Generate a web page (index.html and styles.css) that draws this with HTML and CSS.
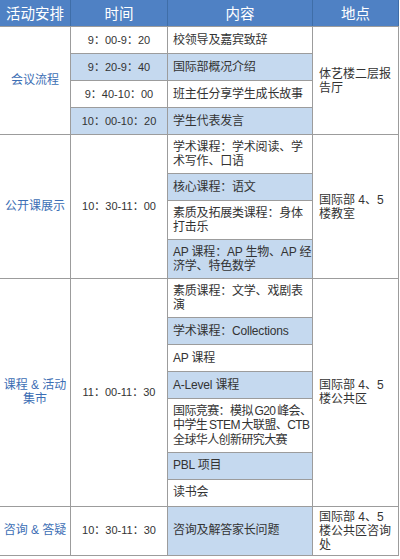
FILE: index.html
```html
<!DOCTYPE html>
<html lang="zh-CN">
<head>
<meta charset="utf-8">
<title>活动安排</title>
<link rel="stylesheet" href="styles.css">
</head>
<body>
<div class="sched">
  <div class="h">活动安排</div>
  <div class="h">时间</div>
  <div class="h">内容</div>
  <div class="h">地点</div>

  <div class="c cat s4">会议流程</div>
  <div class="c tm">9：00-9：20</div>
  <div class="c ct">校领导及嘉宾致辞</div>
  <div class="c pl s4"><span>体艺楼二层报<br>告厅</span></div>
  <div class="c tm alt">9：20-9：40</div>
  <div class="c ct alt">国际部概况介绍</div>
  <div class="c tm">9：40-10：00</div>
  <div class="c ct">班主任分享学生成长故事</div>
  <div class="c tm alt">10：00-10：20</div>
  <div class="c ct alt">学生代表发言</div>

  <div class="c cat s4">公开课展示</div>
  <div class="c tm s4">10：30-11：00</div>
  <div class="c ct"><span>学术课程：学术阅读、学<br>术写作、口语</span></div>
  <div class="c pl s4"><span>国际部 4、5<br>楼教室</span></div>
  <div class="c ct alt">核心课程：语文</div>
  <div class="c ct"><span>素质及拓展类课程：身体<br>打击乐</span></div>
  <div class="c ct alt"><span>AP 课程：AP 生物、AP 经<br>济学、特色数学</span></div>

  <div class="c cat s7"><span>课程 &amp; 活动<br>集市</span></div>
  <div class="c tm s7">11：00-11：30</div>
  <div class="c ct"><span>素质课程：文学、戏剧表<br>演</span></div>
  <div class="c pl s7"><span>国际部 4、5<br>楼公共区</span></div>
  <div class="c ct alt">学术课程：Collections</div>
  <div class="c ct">AP 课程</div>
  <div class="c ct alt">A-Level 课程</div>
  <div class="c ct tight"><span>国际竞赛：模拟 G20 峰会、<br>中学生 STEM 大联盟、CTB<br>全球华人创新研究大赛</span></div>
  <div class="c ct alt">PBL 项目</div>
  <div class="c ct">读书会</div>

  <div class="c cat">咨询 &amp; 答疑</div>
  <div class="c tm">10：30-11：30</div>
  <div class="c ct alt">咨询及解答家长问题</div>
  <div class="c pl"><span>国际部 4、5<br>楼公共区咨询<br>处</span></div>
</div>
</body>
</html>
```
FILE: styles.css
```css
html, body {
  margin: 0;
  padding: 0;
  background: #ffffff;
}

.sched {
  display: grid;
  grid-template-columns: 70px 96px 144px 85px;
  grid-auto-rows: minmax(26px, auto);
  gap: 1px;
  width: max-content;
  padding: 0 1px 1px 0;
  background: #9c9c9c;
  font-family: "Liberation Sans", "Noto Sans CJK SC", sans-serif;
  font-size: 12px;
  line-height: 14.5px;
  color: #333333;
}

.h {
  display: flex;
  align-items: center;
  justify-content: center;
  background: #4f81c4;
  color: #ffffff;
  font-family: "Noto Sans CJK SC", sans-serif;
  font-size: 14.5px;
  box-shadow: 1px 0 0 #3f6ea8;
}

.c {
  display: flex;
  align-items: center;
  background: #ffffff;
  padding: 4.5px 5px;
  white-space: nowrap;
}

.alt {
  background: #c5d9ef;
}

.cat {
  justify-content: center;
  text-align: center;
  color: #3c6eb4;
  padding: 4px 2px;
}

.tm {
  justify-content: center;
  font-size: 11px;
}

.ct {
  letter-spacing: -0.2px;
}

.tight {
  letter-spacing: -0.6px;
  word-spacing: -1px;
}

.pl {
  padding: 3px 6px;
  line-height: 14px;
}

.s4 {
  grid-row: span 4;
}

.s7 {
  grid-row: span 7;
}
```
